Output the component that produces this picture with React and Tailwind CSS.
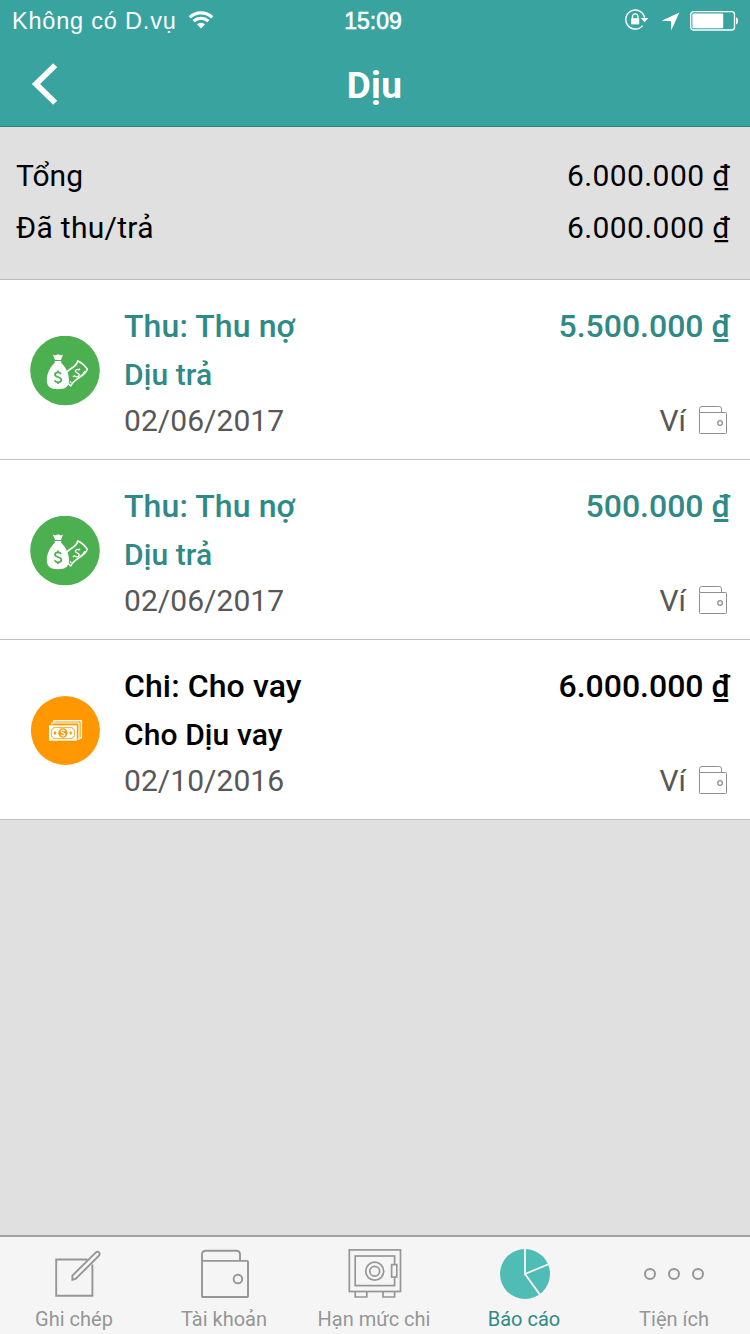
const transactions = [
  { kind: 'in', title: 'Thu: Thu nợ', note: 'Dịu trả', date: '02/06/2017', amount: '5.500.000 ₫' },
  { kind: 'in', title: 'Thu: Thu nợ', note: 'Dịu trả', date: '02/06/2017', amount: '500.000 ₫' },
  { kind: 'out', title: 'Chi: Cho vay', note: 'Cho Dịu vay', date: '02/10/2016', amount: '6.000.000 ₫' },
];

function WifiIcon() {
  return (
    <svg width="26" height="20" viewBox="0 0 26 20" fill="none" stroke="#fff" strokeWidth="3.1">
      <path d="M1.8 7.4 A16 16 0 0 1 24.2 7.4" />
      <path d="M5.6 11.2 A10.6 10.6 0 0 1 20.4 11.2" />
      <path d="M8.9 14.3 A6 6 0 0 1 17.1 14.3 L13 18.6 Z" fill="#fff" stroke="none" />
    </svg>
  );
}

function LockIcon() {
  return (
    <svg width="24" height="22" viewBox="0 0 24 22" fill="none" stroke="#fff">
      <path d="M17.6 16.6 A9.5 9.5 0 1 1 19.6 8.6" strokeWidth="1.4" />
      <path d="M15.8 9 L23.4 9 L19.6 13.3 Z" fill="#fff" stroke="none" />
      <rect x="6.2" y="9.2" width="8" height="6.2" fill="#fff" stroke="none" />
      <path d="M7.5 9.6 V7.6 A2.7 2.7 0 0 1 12.9 7.6 V9.6" strokeWidth="1.4" />
    </svg>
  );
}

function LocationIcon() {
  return (
    <svg width="19" height="19" viewBox="0 0 19 19" fill="#fff">
      <path d="M18.4 0.6 L10.2 18.4 L10 9.2 L0.6 8.8 Z" />
    </svg>
  );
}

function BatteryIcon() {
  return (
    <svg width="50" height="20" viewBox="0 0 50 20">
      <rect x="0.7" y="0.7" width="43.8" height="18.3" rx="2.8" fill="none" stroke="#fff" strokeWidth="1.3" />
      <rect x="2.4" y="2.4" width="30.8" height="14.9" rx="1" fill="#fff" />
      <path d="M46 6.2 C48.8 6.8 48.8 12.8 46 13.4 Z" fill="#fff" />
    </svg>
  );
}

function MoneyBagIcon() {
  return (
    <svg width="70" height="70" viewBox="0 0 70 70" className="block">
      <circle cx="35" cy="34.5" r="34.8" fill="#4caf50" />
      <g fill="none" stroke="#fff" strokeWidth="1.6" strokeLinejoin="round">
        <path d="M37 36 C39 32.5 45.5 32 47.8 24.9 C51.5 26.5 55 29.5 57.3 33.2 C54.5 41 44.5 42 40.8 49.8 L37.4 47" />
        <path d="M43.2 31.2 Q46 29.4 47.4 27 M50.6 40.2 Q53.4 38 54.8 35.2 M39.8 45.5 L41.4 46.8" strokeWidth="1.2" />
        <path d="M49.2 34.4 C47.8 32.4 44.8 33.8 45.8 36 C46.6 37.6 49.2 36.8 49.2 38.8 C49.2 41.2 45.4 41.6 44 39.4 M48.8 34 L50 32.8 M44.3 39.8 L43 41" strokeWidth="1.4" />
      </g>
      <path d="M22.8 18.6 L25 19.5 L28 18.2 L31 19.5 L33 18.6 L31 24 H25 Z" fill="#fff" />
      <path d="M24.7 25 H31.2 V27 C35 30 39 37 39 44 C39 51 35 53.2 28 53.2 C21 53.2 16.8 51 16.8 44 C16.8 37 21 30 24.7 27 Z" fill="#fff" />
      <path d="M31 38 C29.8 35.7 25 35.8 25 38.7 C25 41.5 31.3 40.6 31.3 43.8 C31.3 47 26 47 24.6 44.4 M28 34.4 V36.6 M28 46 V48" fill="none" stroke="#4caf50" strokeWidth="1.7" />
    </svg>
  );
}

function CashIcon() {
  return (
    <svg width="70" height="70" viewBox="0 0 70 70" className="block">
      <circle cx="35.4" cy="34.5" r="34.5" fill="#ff9800" />
      <g fill="none" stroke="#fff" strokeWidth="1.4">
        <path d="M23.8 26.5 V24.8 H51.4 V41.8 H49.8" />
        <path d="M21.8 28.6 V27 H49 V43.2 H47.6" strokeWidth="1.2" />
      </g>
      <rect x="19" y="29.3" width="27.8" height="15.4" fill="#fff" />
      <path d="M23.4 31.6 H42.4 A2 2 0 0 0 44.4 33.6 V40.4 A2 2 0 0 0 42.4 42.4 H23.4 A2 2 0 0 0 21.4 40.4 V33.6 A2 2 0 0 0 23.4 31.6 Z" fill="none" stroke="#ff9800" strokeWidth="0.8" />
      <circle cx="32.9" cy="37" r="4.7" fill="#ff9800" />
      <ellipse cx="25.1" cy="37" rx="1.2" ry="1.7" fill="#ff9800" />
      <ellipse cx="40.7" cy="37" rx="1.2" ry="1.7" fill="#ff9800" />
      <path d="M34.7 35 C33.6 33.7 31 34 31.2 35.7 C31.4 37.2 34.7 36.8 34.7 38.5 C34.7 40.2 32 40.2 31 39" fill="none" stroke="#fff" strokeWidth="1.3" />
    </svg>
  );
}

function SmallWalletIcon() {
  return (
    <svg width="28" height="28" viewBox="0 0 28 28" fill="none" stroke="#8f8f8f" strokeWidth="1" className="block">
      <rect x="0.5" y="6.5" width="27" height="21" rx="0.8" />
      <path d="M0.5 6.8 V2.8 Q0.5 0.5 2.8 0.5 H20.2 Q22.5 0.5 22.5 2.8 V6.5" />
      <circle cx="21.1" cy="17" r="2.3" strokeWidth="1.3" />
    </svg>
  );
}

function ComposeIcon() {
  return (
    <svg width="48" height="48" viewBox="0 0 48 48" fill="none" stroke="#969696" strokeWidth="1.9" className="block">
      <path d="M33.5 9.5 H2.2 V45.8 H38.4 V14.4" />
      <path d="M18.4 29.8 V25.6 L41.4 2.8 C42.6 1.6 44 1.4 45 2.4 C46 3.4 45.8 4.9 44.6 6 L21.6 29 Z" />
    </svg>
  );
}

function WalletIcon() {
  return (
    <svg width="50" height="50" viewBox="0 0 50 50" fill="none" stroke="#969696" strokeWidth="1.9" className="block">
      <rect x="2" y="11.9" width="46" height="36.1" rx="0.8" />
      <path d="M2 12 V5.6 Q2 1.8 5.8 1.8 H36.2 Q40 1.8 40 5.6 V12" />
      <circle cx="37.9" cy="30" r="4.3" />
    </svg>
  );
}

function SafeIcon() {
  return (
    <svg width="54" height="50" viewBox="0 0 54 50" fill="none" stroke="#969696" strokeWidth="1.7" className="block">
      <rect x="1.3" y="0.9" width="51.2" height="41.6" />
      <rect x="7.2" y="7" width="39.4" height="29.6" />
      <circle cx="26.7" cy="22.2" r="9" />
      <circle cx="26.7" cy="22.2" r="4.9" />
      <rect x="43.6" y="15.6" width="5.2" height="12.4" fill="#f5f5f5" />
      <path d="M7.2 42.5 V48 H18.8 V42.5 M35 42.5 V48 H46.6 V42.5" />
    </svg>
  );
}

function PieIcon() {
  return (
    <svg width="52" height="52" viewBox="0 0 52 52" className="block">
      <circle cx="26" cy="26" r="25" fill="#50bcb6" />
      <path d="M26 0 V26 L50 16 M26 26 L41.4 47.4" fill="none" stroke="#f5f5f5" strokeWidth="1.8" />
    </svg>
  );
}

function DotsIcon() {
  return (
    <svg width="62" height="50" viewBox="0 0 62 50" fill="none" stroke="#969696" strokeWidth="2" className="block">
      <circle cx="7" cy="26" r="5" />
      <circle cx="31" cy="26" r="5" />
      <circle cx="55" cy="26" r="5" />
    </svg>
  );
}

function Transaction({ item }) {
  const color = item.kind === 'in' ? 'text-[#2f8a86]' : 'text-black';
  return (
    <li className="flex h-[180px] border-b border-[#c2c2c2] bg-white pl-[30px] pr-5">
      <div className="mt-14 w-[94px] shrink-0">{item.kind === 'in' ? <MoneyBagIcon /> : <CashIcon />}</div>
      <div className="flex grow flex-col pt-[26px]">
        <div className={`flex justify-between text-[32px] leading-[40px] font-medium ${color}`}>
          <span className="tracking-[0.1px]">{item.title}</span>
          <span>{item.amount}</span>
        </div>
        <div className={`mt-[9px] text-[30px] leading-[40px] font-medium tracking-[0.1px] ${color}`}>{item.note}</div>
        <div className="mt-1.5 flex items-start justify-between text-[30px] leading-[40px] text-[#575757]">
          <span className="tracking-[0.05px]">{item.date}</span>
          <span className="flex pr-[3px]">
            <span className="mr-[13px]">Ví</span>
            <span className="pt-[5px]"><SmallWalletIcon /></span>
          </span>
        </div>
      </div>
    </li>
  );
}

const tabs = [
  { label: 'Ghi chép', Icon: ComposeIcon, pad: 'pl-1.5 pt-0.5' },
  { label: 'Tài khoản', Icon: WalletIcon, pad: 'pt-px' },
  { label: 'Hạn mức chi', Icon: SafeIcon, pad: 'pr-[1px] pt-px' },
  { label: 'Báo cáo', Icon: PieIcon, pad: '', active: true },
  { label: 'Tiện ích', Icon: DotsIcon, pad: 'pr-[2px]' },
];

export default function App() {
  return (
    <div className="flex h-[1334px] w-[750px] flex-col overflow-hidden bg-[#e0e0e0] font-['Roboto','Noto_Sans',sans-serif] text-black">
      <header className="h-[127px] shrink-0 border-b border-[#2f7f7c] bg-[#38a39f] text-white">
        <div className="grid h-10 grid-cols-3 items-center pl-3 pr-[10px] font-['Liberation_Sans',sans-serif] text-[23.5px]">
          <div className="flex items-center gap-[11px] whitespace-nowrap">
            <span className="pt-[3px] tracking-[0.8px]">Không có D.vụ</span>
            <WifiIcon />
          </div>
          <div className="pr-[6px] pt-[2px] text-center text-[23px] [-webkit-text-stroke:0.6px_white]">15:09</div>
          <div className="flex items-center justify-end">
            <LockIcon />
            <span className="ml-3 mr-[10px] pt-[2px]"><LocationIcon /></span>
            <span className="pt-px"><BatteryIcon /></span>
          </div>
        </div>
        <div className="grid h-[86px] grid-cols-3">
          <svg width="28" height="44" viewBox="0 0 28 44" className="ml-[31px] mt-[22px]" fill="none" stroke="#fff" strokeWidth="5.8">
            <path d="M24.2 3.2 L5 22 L24.2 40.8" />
          </svg>
          <h1 className="pt-[25px] pr-px text-center text-[37px] leading-[42px] font-bold tracking-[0.3px]">Dịu</h1>
        </div>
      </header>

      <section className="flex h-[153px] shrink-0 flex-col border-b border-[#bdbdbd] pt-[23px] pl-4 pr-5 text-[30px] leading-[52px]">
        <div className="flex justify-between">
          <span>Tổng</span>
          <span className="tracking-[0.4px]">6.000.000 ₫</span>
        </div>
        <div className="flex justify-between">
          <span className="tracking-[0.3px]">Đã thu/trả</span>
          <span className="tracking-[0.4px]">6.000.000 ₫</span>
        </div>
      </section>

      <ul className="grow">
        {transactions.map((item, i) => (
          <Transaction key={i} item={item} />
        ))}
      </ul>

      <nav className="grid h-[99px] shrink-0 grid-cols-5 border-t-2 border-[#a3a3a3] bg-[#f5f5f5]">
        {tabs.map(({ label, Icon, pad, active }) => (
          <div key={label} className="flex flex-col items-center">
            <div className={`mt-[11px] h-[52px] ${pad}`}><Icon /></div>
            <span className={`mt-[5px] pr-0.5 text-[20px] leading-7 ${active ? 'text-[#2f8a86]' : 'text-[#969696]'}`}>
              {label}
            </span>
          </div>
        ))}
      </nav>
    </div>
  );
}
